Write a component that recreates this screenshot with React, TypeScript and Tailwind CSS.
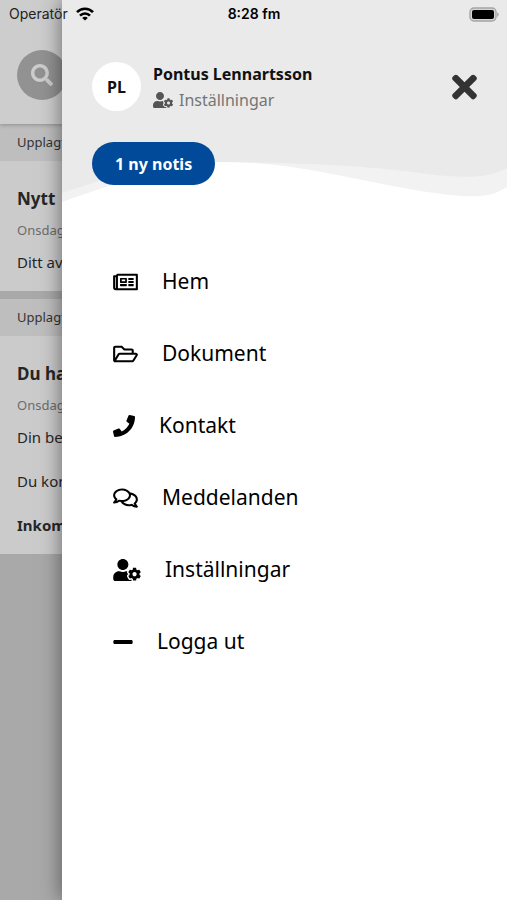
import { IconType } from "react-icons";
import {
  FaMinus,
  FaPhone,
  FaRegComments,
  FaRegFolderOpen,
  FaRegNewspaper,
  FaSearch,
  FaTimes,
  FaUserCog,
} from "react-icons/fa";

const menuItems: { label: string; icon: IconType; width: string }[] = [
  { label: "Hem", icon: FaRegNewspaper, width: "w-[25px]" },
  { label: "Dokument", icon: FaRegFolderOpen, width: "w-[25px]" },
  { label: "Kontakt", icon: FaPhone, width: "w-[22px]" },
  { label: "Meddelanden", icon: FaRegComments, width: "w-[25px]" },
  { label: "Inställningar", icon: FaUserCog, width: "w-[28px]" },
  { label: "Logga ut", icon: FaMinus, width: "w-[20px]" },
];

const posts = [
  { title: "Nytt", lines: ["Ditt av"], note: "" },
  { title: "Du har", lines: ["Din be", "Du kom"], note: "Inkom" },
];

function StatusBar() {
  return (
    <div className="absolute inset-x-0 top-0 z-20 grid h-7 grid-cols-3 items-center pr-2 pl-[9px] font-[Inter,sans-serif] text-sm text-black">
      <div className="flex items-center gap-2">
        <span className="text-[#222]">Operatör</span>
        <svg className="h-[14px] w-[18px]" viewBox="0 0 18 14" fill="none" stroke="currentColor" strokeWidth="2.6">
          <path d="M1 5.2C5.4 .6 12.6 .6 17 5.2" />
          <path d="M4 8.6C6.8 5.7 11.2 5.7 14 8.6" />
          <path d="M9 13.6 6.2 10.9C7.8 9.3 10.2 9.3 11.8 10.9Z" fill="currentColor" stroke="none" />
        </svg>
      </div>
      <span className="text-center font-semibold">8:28 fm</span>
      <svg className="h-[15px] w-[30px] justify-self-end" viewBox="0 0 30 15">
        <rect x="1" y="1" width="26" height="13" rx="4" fill="#d5d5d5" stroke="#a5a5a5" strokeWidth="1.4" />
        <rect x="3" y="3" width="22" height="9" rx="2" fill="#000" />
        <path d="M28.2 5.2C30.2 6 30.2 9 28.2 9.8Z" fill="#a5a5a5" />
      </svg>
    </div>
  );
}

function Feed() {
  return (
    <main className="min-h-screen bg-[#a9a9a9] text-[#262626]">
      <header className="relative bg-[#cdcdcd] px-[17px] pt-[50px] pb-6 shadow-[0_1px_4px_rgba(0,0,0,0.25)]">
        <button
          type="button"
          aria-label="Sök"
          className="flex size-[50px] items-center justify-center rounded-full bg-[#929292] text-[#cdcdcd]"
        >
          <FaSearch className="size-[22px]" />
        </button>
      </header>
      <div className="flex flex-col gap-2">
        {posts.map((post) => (
          <article key={post.title} className="bg-[#cbcbcb] whitespace-nowrap">
            <p className="bg-[#bebebe] px-[17px] py-2 text-[13px] leading-[21px] text-[#333]">Upplagt</p>
            <div className="px-[17px] pt-6 pb-[15px]">
              <h2 className="text-[17px] leading-7 font-bold">{post.title}</h2>
              <p className="mt-[3px] text-[13px] leading-7 text-[#6c6c6c]">Onsdag</p>
              <div className="mt-1 flex flex-col gap-4 text-[15px] leading-7">
                {post.lines.map((line) => (
                  <p key={line}>{line}</p>
                ))}
                {post.note && <p className="font-bold">{post.note}</p>}
              </div>
            </div>
          </article>
        ))}
      </div>
    </main>
  );
}

function Wave() {
  return (
    <svg className="absolute inset-0 size-full" viewBox="0 0 445 204" preserveAspectRatio="none" aria-hidden="true">
      <path d="M0 0H445V187C426 200 402 197 365 192C300 182 230 161 160 162C100 164 62 181 0 202Z" fill="#f2f2f2" />
      <path d="M0 0H445V168C425 179 402 178 365 174C310 166 250 163 160 162C100 162 62 172 0 193Z" fill="#eaeaea" />
    </svg>
  );
}

function DrawerHeader() {
  return (
    <header className="relative pt-[62px] pr-[30px] pb-[19px] pl-[30px]">
      <Wave />
      <div className="relative flex items-center">
        <div className="flex size-[49px] items-center justify-center rounded-full bg-white text-base font-bold text-[#111]">
          PL
        </div>
        <div className="ml-3 flex-1">
          <p className="text-base leading-[22px] font-bold text-[#111]">Pontus Lennartsson</p>
          <a href="#installningar" className="mt-1 flex items-center gap-1.5 text-base leading-[22px] text-[#757575]">
            <FaUserCog className="h-4 w-5 text-[#555]" />
            Inställningar
          </a>
        </div>
        <button type="button" aria-label="Stäng" className="text-[#333]">
          <FaTimes className="h-9 w-[25px]" />
        </button>
      </div>
      <button
        type="button"
        className="relative mt-[31px] h-[43px] rounded-full bg-[#004a99] px-[23px] text-base font-bold text-white"
      >
        1 ny notis
      </button>
    </header>
  );
}

function Drawer() {
  return (
    <aside className="absolute inset-y-0 right-0 left-[62px] z-10 bg-white shadow-[0_0_20px_rgba(0,0,0,0.5)]">
      <DrawerHeader />
      <nav className="pt-[42px] pl-[51px]">
        <ul>
          {menuItems.map(({ label, icon: Icon, width }) => (
            <li key={label}>
              <a href="#" className="flex h-[72px] items-center gap-6 text-[21px] text-black">
                <Icon className={`h-[22px] ${width}`} />
                {label}
              </a>
            </li>
          ))}
        </ul>
      </nav>
    </aside>
  );
}

export default function App() {
  return (
    <div className="relative min-h-screen overflow-hidden font-['Noto_Sans',sans-serif]">
      <StatusBar />
      <Feed />
      <Drawer />
    </div>
  );
}
